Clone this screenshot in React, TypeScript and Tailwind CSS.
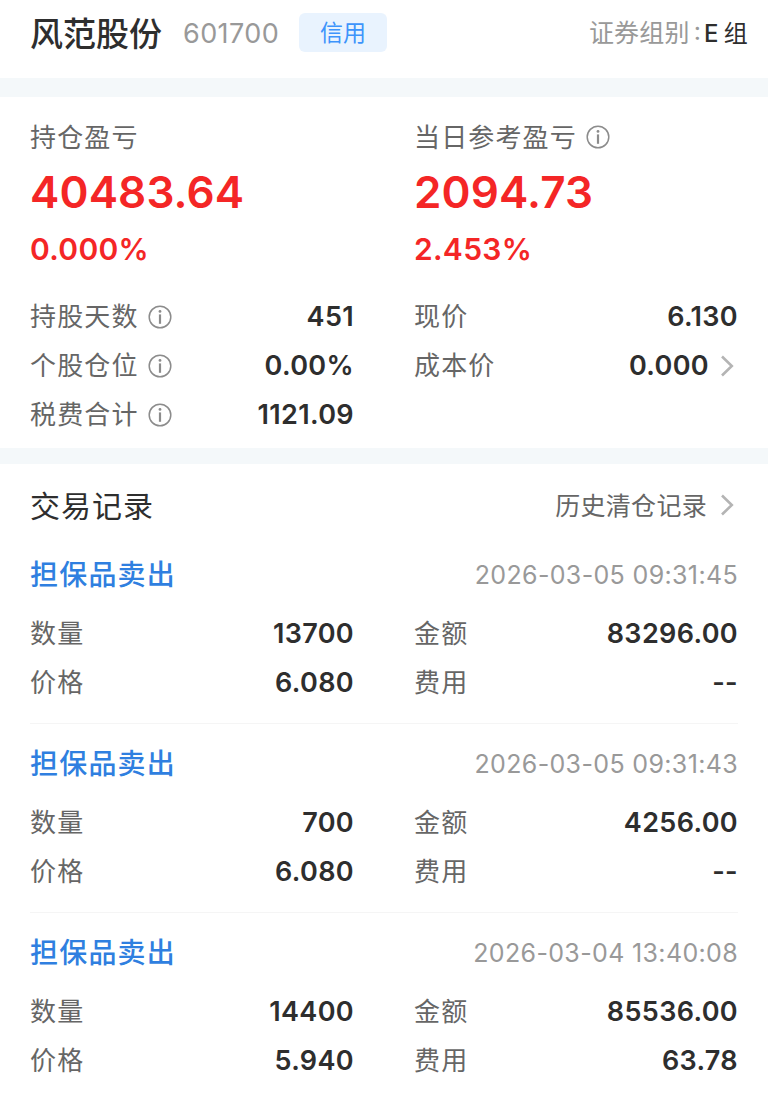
import React from 'react'

interface RowProps {
    label: string;
    value: string;
    info?: boolean;
    arrow?: boolean;
}

interface TradeProps {
    time: string;
    amount: string;
    price: string;
    total: string;
    fee: string;
}

const trades: TradeProps[] = [
    { time: '2026-03-05 09:31:45', amount: '13700', price: '6.080', total: '83296.00', fee: '--' },
    { time: '2026-03-05 09:31:43', amount: '700', price: '6.080', total: '4256.00', fee: '--' },
    { time: '2026-03-04 13:40:08', amount: '14400', price: '5.940', total: '85536.00', fee: '63.78' },
]

function InfoIcon() {
  return (
    <svg width="24" height="24" viewBox="0 0 24 24" fill="none" className="ml-[9px] shrink-0 text-[#8c8c8c]">
      <circle cx="12" cy="12" r="10.8" stroke="currentColor" strokeWidth="1.5" />
      <circle cx="12" cy="6.4" r="1.4" fill="currentColor" />
      <path d="M12 9.4V18.8" stroke="currentColor" strokeWidth="2.2" />
    </svg>
  )
}

function Arrow() {
  return (
    <svg width="14" height="22" viewBox="0 0 14 22" fill="none" className="mr-[4px] shrink-0 text-[#b4b4b4]">
      <path d="M2 1.5L11.8 11L2 20.5" stroke="currentColor" strokeWidth="2.6" />
    </svg>
  )
}

function Row({label, value, info, arrow}:RowProps) {
  return (
    <div className="flex h-[49px] items-center">
      <span className="pt-px text-[26px] tracking-[1.15px] text-[#666]">{label}</span>
      {info && <InfoIcon />}
      <span className="ml-auto text-[27px] font-semibold tracking-[0.35px] text-[#2e2e2e]">{value}</span>
      {arrow && <div className="ml-[11px]"><Arrow /></div>}
    </div>
  )
}

function Trade({time, amount, price, total, fee}:TradeProps) {
  return (
    <div className="mx-[30px] h-[189px] border-b border-[#f5f5f5] pt-[12px] last:border-0">
      <div className="flex h-[56px] items-center justify-between">
        <h3 className="text-[28px] font-medium tracking-[1.2px] text-[#2f7fe0]">担保品卖出</h3>
        <span className="text-[25px] tracking-[0.35px] text-[#999]">{time}</span>
      </div>
      <div className="mt-[6px] grid grid-cols-2 gap-x-[60px]">
        <Row label="数量" value={amount} />
        <Row label="金额" value={total} />
        <Row label="价格" value={price} />
        <Row label="费用" value={fee} />
      </div>
    </div>
  )
}

export default function App() {
  return (
    <div className="h-[1099px] w-[768px] overflow-hidden bg-white font-['Inter','Noto_Sans_CJK_SC',sans-serif] leading-none whitespace-nowrap">
      <header className="flex h-[78px] items-center pr-5 pb-[13px] pl-[30px]">
        <h1 className="pt-[3px] text-[33px] font-medium text-[#2e2e2e]">风范股份</h1>
        <span className="ml-[21px] pt-px text-[27px] tracking-[0.4px] text-[#999]">601700</span>
        <span className="ml-[20px] flex h-[39px] w-[88px] items-center justify-center rounded-[6px] bg-[#e9f3fe] pt-px text-[23px] text-[#3d94fb]">信用</span>
        <p className="ml-auto flex items-center pt-[2px] text-[25px] tracking-[0.2px] text-[#999]">
          证券组别<span className="ml-[4px] pb-[4px]">:</span>
          <span className="ml-[3px] text-[24px] font-medium text-[#2e2e2e]">E</span>
          <span className="ml-[5px] text-[24px] text-[#2e2e2e]">组</span>
        </p>
      </header>
      <div className="h-[19px] bg-[#f4f8fa]" />

      <section className="h-[351px] px-[30px] pt-[20px]">
        <div className="grid grid-cols-2 gap-x-[60px] text-[#f42626]">
          <div>
            <div className="flex h-[40px] items-center text-[26px] tracking-[1.15px] text-[#666]"><span className="pt-[2px]">持仓盈亏</span></div>
            <div className="flex h-[68px] items-center pt-px text-[44px] font-semibold tracking-[0.15px]">40483.64</div>
            <div className="flex h-[47px] items-center text-[30px] font-semibold tracking-[0.3px]">0.000%</div>
          </div>
          <div>
            <div className="flex h-[40px] items-center text-[26px] tracking-[1.15px] text-[#666]"><span className="pt-[2px]">当日参考盈亏</span><InfoIcon /></div>
            <div className="flex h-[68px] items-center pt-px text-[44px] font-semibold tracking-[0.15px]">2094.73</div>
            <div className="flex h-[47px] items-center text-[30px] font-semibold tracking-[0.3px]">2.453%</div>
          </div>
        </div>
        <div className="mt-[20px] grid grid-cols-2 gap-x-[60px]">
          <Row label="持股天数" value="451" info />
          <Row label="现价" value="6.130" />
          <Row label="个股仓位" value="0.00%" info />
          <Row label="成本价" value="0.000" arrow />
          <Row label="税费合计" value="1121.09" info />
        </div>
      </section>
      <div className="h-4 bg-[#f4f8fa]" />

      <section>
        <div className="flex h-[82px] items-center px-[30px]">
          <h2 className="pt-px text-[30px] tracking-[1px] text-[#2e2e2e]">交易记录</h2>
          <span className="mr-[13px] ml-auto pt-[2px] text-[25px] tracking-[0.3px] text-[#666]">历史清仓记录</span>
          <Arrow />
        </div>
        <div className="-mt-[11px]">
          {trades.map((trade) => <Trade key={trade.time} {...trade} />)}
        </div>
      </section>
    </div>
  )
}
